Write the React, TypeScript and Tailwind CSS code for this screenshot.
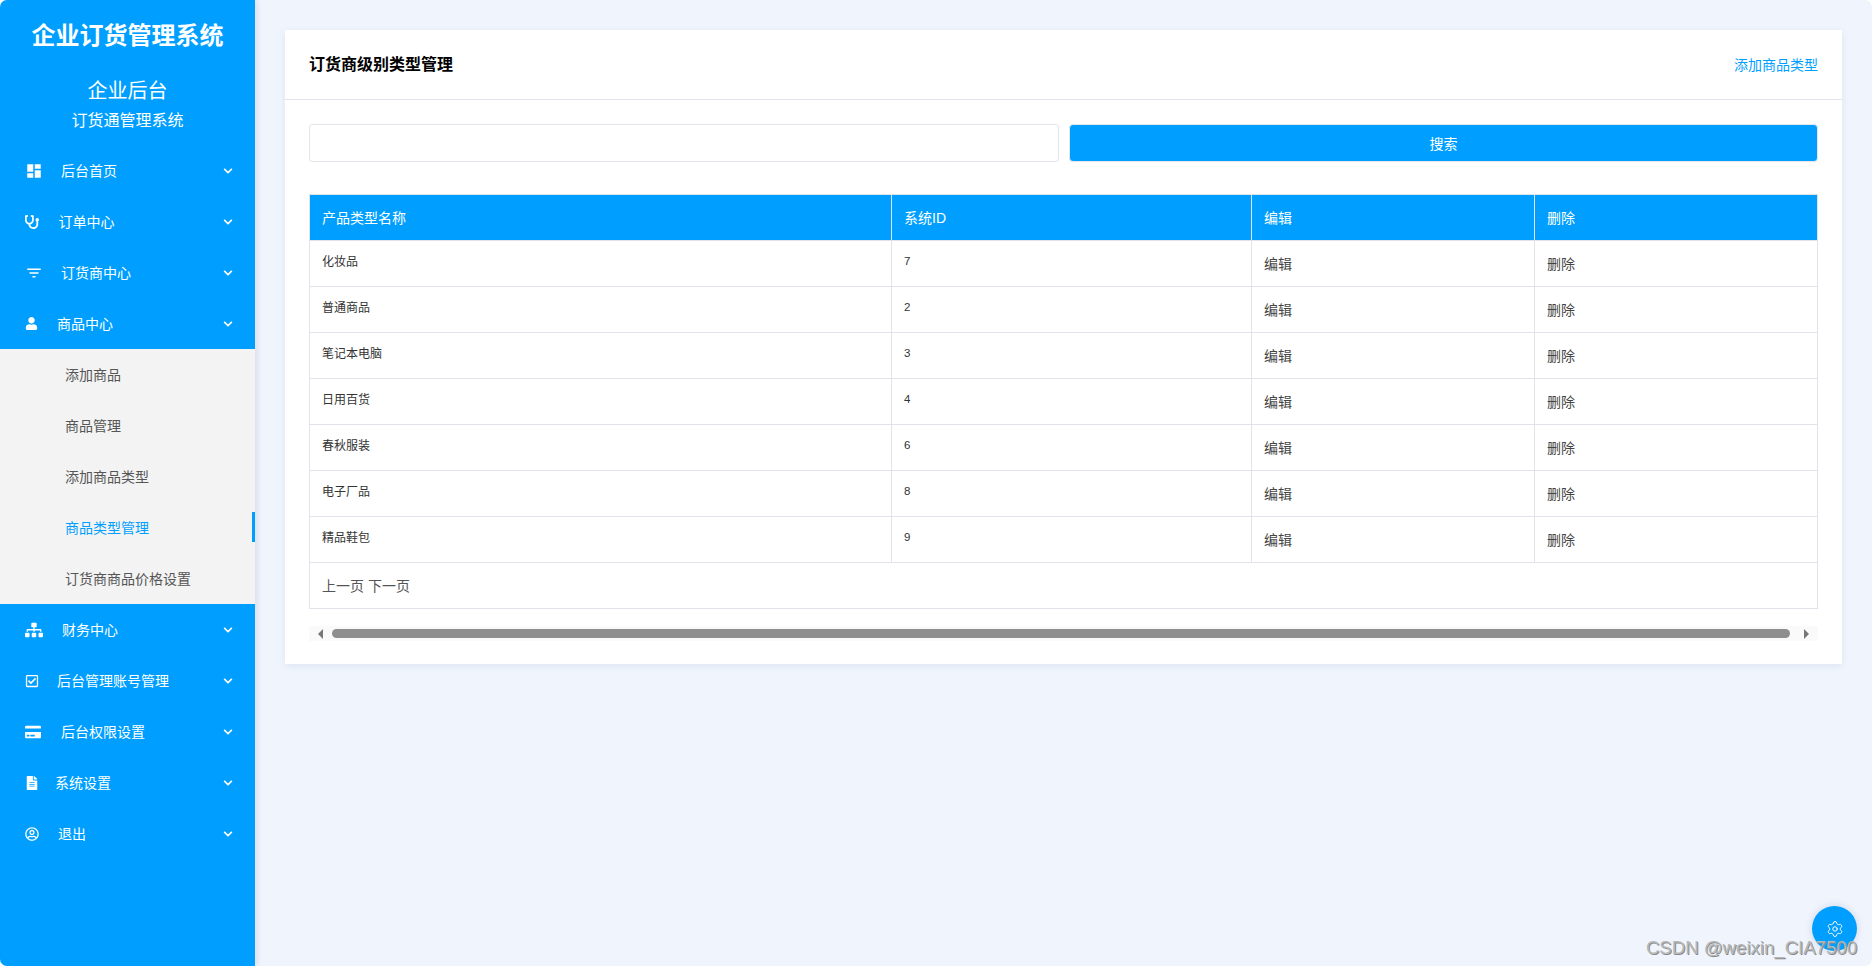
import { FaChevronDown, FaCreditCard, FaFileAlt, FaRegCheckSquare, FaRegUserCircle, FaSitemap, FaStethoscope, FaUser } from 'react-icons/fa'
import { MdDashboard, MdFilterList } from 'react-icons/md'
import { Settings } from 'lucide-react'

const FONT = 'font-["Liberation_Sans","Noto_Sans_CJK_SC",sans-serif]'

const topMenus = [
  { label: '后台首页', icon: <MdDashboard className="h-[18px] w-[18px]" />, slot: 'w-[36px]' },
  { label: '订单中心', icon: <FaStethoscope className="h-[14px] w-[14px]" />, slot: 'w-[33.5px]' },
  { label: '订货商中心', icon: <MdFilterList className="h-[18px] w-[18px]" />, slot: 'w-[36px]' },
  { label: '商品中心', icon: <FaUser className="h-[13px] w-[13px]" />, slot: 'w-[32px]' },
]

const bottomMenus = [
  { label: '财务中心', icon: <FaSitemap className="h-[18px] w-[18px]" />, slot: 'w-[37px]' },
  { label: '后台管理账号管理', icon: <FaRegCheckSquare className="h-[14px] w-[14px]" />, slot: 'w-[32px]' },
  { label: '后台权限设置', icon: <FaCreditCard className="h-[16px] w-[16px]" />, slot: 'w-[36px]' },
  { label: '系统设置', icon: <FaFileAlt className="h-[14px] w-[14px]" />, slot: 'w-[30px]' },
  { label: '退出', icon: <FaRegUserCircle className="h-[14px] w-[14px]" />, slot: 'w-[33px]' },
]

const subMenus = ['添加商品', '商品管理', '添加商品类型', '商品类型管理', '订货商商品价格设置']

const rows = [
  ['化妆品', '7'],
  ['普通商品', '2'],
  ['笔记本电脑', '3'],
  ['日用百货', '4'],
  ['春秋服装', '6'],
  ['电子厂品', '8'],
  ['精品鞋包', '9'],
]

type Menu = (typeof topMenus)[number]

function MenuRow({ menu }: { menu: Menu }) {
  return (
    <div className="flex h-[51px] items-center pl-[25px] pr-[22px] text-sm text-white">
      <span className={`flex shrink-0 items-center ${menu.slot}`}>{menu.icon}</span>
      <span className="flex-1">{menu.label}</span>
      <FaChevronDown className="h-[10px] w-[10px]" />
    </div>
  )
}

function Sidebar() {
  return (
    <aside className="flex w-[255px] shrink-0 flex-col bg-[#009fff] shadow-[2px_0_6px_rgba(60,80,130,0.15)]">
      <div className="flex h-[145px] flex-col items-center text-white">
        <h1 className="mt-[20px] text-2xl font-bold leading-[32px]">企业订货管理系统</h1>
        <div className="mt-[21px] text-xl leading-[36px]">企业后台</div>
        <div className="text-base leading-[24px]">订货通管理系统</div>
      </div>
      {topMenus.map((m) => (
        <MenuRow key={m.label} menu={m} />
      ))}
      <div className="bg-[#f3f3f3]">
        {subMenus.map((label) => {
          const active = label === '商品类型管理'
          return (
            <div key={label} className="relative flex h-[51px] items-center pl-[65px] text-sm">
              <span className={active ? 'text-[#009fff]' : 'text-[#555555]'}>{label}</span>
              {active && <span className="absolute right-0 top-[10px] h-[30px] w-[3px] bg-[#009fff]" />}
            </div>
          )
        })}
      </div>
      {bottomMenus.map((m) => (
        <MenuRow key={m.label} menu={m} />
      ))}
    </aside>
  )
}

function TypeTable() {
  const cell = 'border border-[#e0e3e9] pl-[12px] pr-[11px]'
  return (
    <table className="w-full table-fixed border-collapse">
      <colgroup>
        <col className="w-[582px]" />
        <col className="w-[360px]" />
        <col className="w-[283px]" />
        <col />
      </colgroup>
      <thead>
        <tr className="h-[46px] bg-[#009fff] text-left text-sm font-normal text-white">
          {['产品类型名称', '系统ID', '编辑', '删除'].map((h, i) => (
            <th key={h} className={`${cell} font-normal ${i === 0 ? 'pl-[11px]' : ''}`}>
              {h}
            </th>
          ))}
        </tr>
      </thead>
      <tbody>
        {rows.map(([name, id]) => (
          <tr key={id} className="h-[46px]">
            <td className={`${cell} pb-[3px] pl-[11px] text-xs text-[#333333]`}>{name}</td>
            <td className={`${cell} pb-[3px] text-[11.5px] text-[#333333]`}>{id}</td>
            <td className={`${cell} text-sm text-[#444444]`}>编辑</td>
            <td className={`${cell} text-sm text-[#444444]`}>删除</td>
          </tr>
        ))}
        <tr className="h-[46px]">
          <td colSpan={4} className={`${cell} pl-[11px] text-sm text-[#555555]`}>
            上一页 下一页
          </td>
        </tr>
      </tbody>
    </table>
  )
}

function ScrollBar() {
  return (
    <div className="mt-[17px] flex h-[15px] items-center bg-[#fafafa] pl-[9px] pr-[9px]">
      <span className="h-0 w-0 border-y-[5px] border-r-[5px] border-y-transparent border-r-[#777777]" />
      <div className="ml-[9px] mr-[14px] h-[9px] flex-1 rounded-full bg-[#8e8e8e]" />
      <span className="h-0 w-0 border-y-[5px] border-l-[5px] border-y-transparent border-l-[#777777]" />
    </div>
  )
}

export default function App() {
  return (
    <div className={`relative flex h-screen w-full overflow-hidden rounded-[7px] bg-[#f0f5fd] ${FONT}`}>
      <Sidebar />
      <main className="flex-1 pl-[30px] pr-[30px] pt-[30px]">
        <section className="h-[634px] bg-white shadow-[0_2px_8px_rgba(70,90,150,0.1)]">
          <header className="flex h-[70px] items-center justify-between border-b border-[#e0e3e9] pl-[24px] pr-[24px]">
            <h2 className="text-base font-bold text-black">订货商级别类型管理</h2>
            <a className="text-sm text-[#009fff]">添加商品类型</a>
          </header>
          <div className="px-[24px] pt-[24px]">
            <div className="flex h-[38px] gap-[10px]">
              <input className="h-full w-[750px] rounded-[3px] border border-[#e4e6eb] bg-white" />
              <button type="button" className="flex-1 rounded-[4px] border border-[#e4e6eb] bg-[#009fff] pt-[2px] text-sm text-white">
                搜索
              </button>
            </div>
            <div className="mt-[32px]">
              <TypeTable />
            </div>
            <ScrollBar />
          </div>
        </section>
      </main>
      <div className="absolute bottom-[15px] right-[15px] flex h-[45px] w-[45px] items-center justify-center rounded-full bg-[#009fff] shadow-[0_0_8px_rgba(70,90,150,0.2)]">
        <Settings className="h-[18px] w-[18px] text-white" strokeWidth={1.3} />
      </div>
      <div className="absolute bottom-[7px] right-[15px] text-[18.6px] leading-[23px] text-[#b8b8b8] [text-shadow:1px_1px_0_#8a8a8a]">
        CSDN @weixin_CIA7500
      </div>
    </div>
  )
}
